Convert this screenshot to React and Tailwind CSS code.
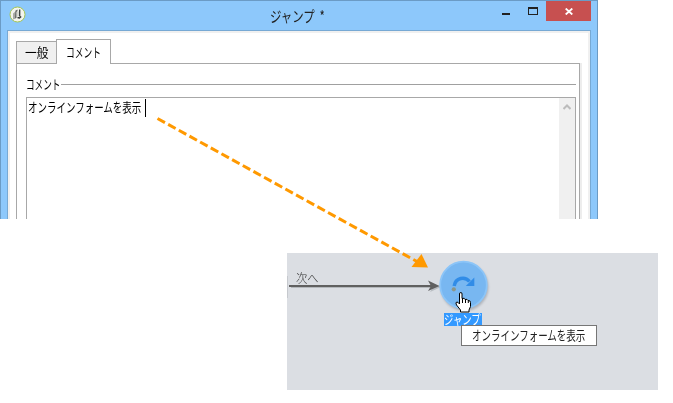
const ui = "font-['Noto_Sans_CJK_JP','Noto_Sans',sans-serif]";

function Label({ children, className }) {
  return (
    <span className={`${ui} block origin-left whitespace-nowrap ${className}`}>{children}</span>
  );
}

function AppIcon() {
  return (
    <svg width="17" height="17" viewBox="0 0 17 17" className="shrink-0">
      <circle cx="8.5" cy="8.5" r="7.5" fill="#f4f5ee" stroke="#a5c552" strokeWidth="1" />
      <path d="M4 7.5L7 5v7.500l-3 1z" fill="#a8aaa5" />
      <path d="M6.5 4.500L8.500 3.500v1.500L7.500 6v6H6z" fill="#686b68" />
      <path d="M10.700 3.500v7M8.500 11.500l2 .5 1.700-1.500" fill="none" stroke="#333936" strokeWidth="1.300" />
      <path d="M9 5.500v4.500" stroke="#b9bcb6" strokeWidth="1" />
    </svg>
  );
}

function TitleBar() {
  return (
    <div className="flex h-[29px] shrink-0 items-start">
      <div className="w-[269px] shrink-0 pt-[5px] pl-[8px]">
        <AppIcon />
      </div>
      <div className="w-[229px] pt-[5px]">
        <Label className="text-[15px] leading-[20px] text-[#222] [word-spacing:3px] [transform:scaleX(.76)]">ジャンプ *</Label>
      </div>
      <div className="flex flex-1">
        <div className="mt-[12px] ml-[3px] h-[2px] w-[8px] bg-[#222]" />
        <div className="mt-[6px] ml-[18px] h-[8px] w-[10px] border border-t-2 border-[#222]" />
      </div>
      <div className="mr-[6px] flex h-[20px] w-[45px] items-center justify-center bg-[#c75050]">
        <svg width="8" height="7" viewBox="0 0 8 7" className="mt-[1px] ml-[1px]">
          <path d="M.7.5l6.6 6M7.3.5L.7 6.5" stroke="#fff" strokeWidth="1.8" />
        </svg>
      </div>
    </div>
  );
}

function DialogWindow() {
  return (
    <div className="flex h-[219px] w-[598px] flex-col overflow-hidden border-x border-t border-[#6b9bc5] bg-[#8dc8fb]">
      <TitleBar />
      <div className="mx-[6px] min-h-0 flex-1 border-x border-t border-[#77a9d4]">
        <div className="h-full overflow-hidden border-x-2 border-t-2 border-[#f0f0f0] bg-white pt-[6px] pl-[6px]">
          <div className="flex h-[24px] items-end">
            <div className="h-[22px] w-[40px] border-t border-l border-[#a8a8a8] bg-[#f0f0f0] pl-[8px]">
              <Label className="text-[13px] leading-[20px] text-black [transform:scaleX(.9)]">一般</Label>
            </div>
            <div className="z-10 -mb-px h-[25px] w-[55px] border-x border-t border-[#a8a8a8] bg-white pl-[9px]">
              <Label className="text-[13px] leading-[23px] text-black [transform:scaleX(.67)]">コメント</Label>
            </div>
          </div>
          <div className="h-[170px] w-[566px] border-r-2 border-[#ededed]">
            <div className="h-full border-x border-t border-[#a8a8a8] pr-[3px] pl-[9px]">
              <div className="mt-[10px] flex h-[20px] items-center">
                <div className="w-[35px] shrink-0">
                  <Label className="w-[52px] text-[13px] leading-[20px] text-black [transform:scaleX(.66)]">コメント</Label>
                </div>
                <div className="h-px flex-1 bg-[#a0a0a0]" />
              </div>
              <div className="mt-[3px] flex h-[140px] border border-[#a8a8a8]">
                <div className="flex flex-1 items-start pt-px pl-px">
                  <div className="w-[117px]">
                    <Label className="w-[156px] text-[13px] leading-[16px] text-black [transform:scaleX(.73)]">
                      オンラインフォームを表示
                    </Label>
                  </div>
                  <div className="h-[18px] w-px bg-black" />
                </div>
                <div className="w-[16px] bg-[#f0f0f0] pt-[6px] pl-[4px]">
                  <svg width="8" height="6" viewBox="0 0 8 6">
                    <path d="M.5 5L4 1.5 7.5 5" fill="none" stroke="#bcbcbc" strokeWidth="2" />
                  </svg>
                </div>
              </div>
            </div>
          </div>
        </div>
      </div>
    </div>
  );
}

function JumpNode() {
  return (
    <svg width="60" height="60" viewBox="433 255 60 60" className="absolute top-[2px] left-[146px]">
      <circle cx="464.5" cy="287" r="24" fill="#6c7480" opacity=".4" className="blur-[1px]" />
      <circle cx="463.5" cy="285" r="23.3" fill="#78b7f1" stroke="#8cc5f8" strokeWidth="1.8" />
      <path d="M454.2 286C455.5 277.5 465 276 469.5 281.5" fill="none" stroke="#318ce7" strokeWidth="3.5" />
      <path d="M474.300 277.500v8.500h-8.500z" fill="#318ce7" />
      <circle cx="453.8" cy="289.3" r="2.1" fill="#8b9689" />
    </svg>
  );
}

function HandCursor() {
  return (
    <svg width="17" height="21" viewBox="0 0 17 21" className="absolute top-[39px] left-[168px]">
      <path
        d="M4.5 12V2q0-1.5 1.3-1.5T7 2v4.5q2.8-1 3 1 2.500-.8 3 1 2.500-.3 2.500 2v4l-1.500 3.500v2H5.500v-2L1.500 13q-1.500-3 .5-3 1.300.2 2.500 2z"
        fill="#fff"
        stroke="#000"
      />
      <path d="M7.500 6v5M10.500 7.500V11M13.300 8.500V11" stroke="#000" fill="none" />
    </svg>
  );
}

function FlowCanvas() {
  return (
    <div className="relative mt-[34px] ml-[287px] h-[137px] w-[371px] bg-[#dbdee3]">
      <svg width="156" height="24" viewBox="0 0 156 24" className="absolute top-[22px] left-0">
        <path d="M4 12.500h139" stroke="#b4b8bc" strokeWidth="1" />
        <path d="M143 7l11 5-11 5 2.500-4z" fill="#9fa3a8" opacity=".6" />
        <path d="M.5 1v22" stroke="#c6c9ce" />
        <path d="M2 11h142" stroke="#606060" strokeWidth="2" />
        <path d="M141 5.500l11.500 5.500-11.500 5 3-5z" fill="#606060" />
      </svg>
      <Label className="absolute top-[15px] left-[9px] text-[12px] leading-[20px] font-light text-[#333] [transform:scaleX(.94)]">
        次へ
      </Label>
      <JumpNode />
      <div className="absolute top-[60px] left-[157px] h-[13px] w-[38px] bg-[#3399ff]">
        <Label className="text-[13px] leading-[12px] text-white [transform:scaleX(.72)]">ジャンプ</Label>
      </div>
      <div className="absolute top-[72px] left-[174px] h-[21px] w-[136px] border border-[#767676] bg-white pl-[10px]">
        <Label className="w-[156px] text-[13px] leading-[18px] text-[#222] [transform:scaleX(.73)]">
          オンラインフォームを表示
        </Label>
      </div>
      <HandCursor />
    </div>
  );
}

export default function App() {
  return (
    <div className="relative h-[403px] w-[673px] overflow-hidden bg-white">
      <DialogWindow />
      <FlowCanvas />
      <svg width="673" height="403" className="pointer-events-none absolute top-0 left-0">
        <path d="M157.500 118.500L417 261.500" stroke="#ff9900" strokeWidth="3" strokeDasharray="8.500 3.670" />
        <path d="M421.500 254l6.500 13.500-16.500-.5z" fill="#ff9900" />
      </svg>
    </div>
  );
}
